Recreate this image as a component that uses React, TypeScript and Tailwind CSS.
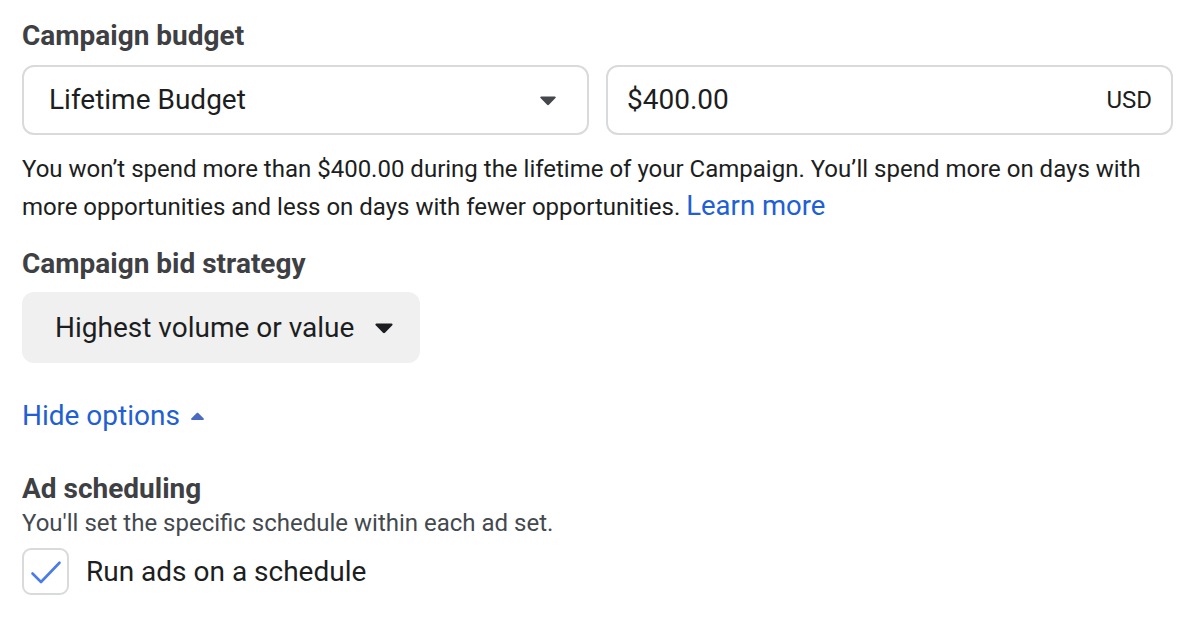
import React from "react";

const Caret = ({ className }: { className: string }) => (
  <svg viewBox="0 0 20 12" className={className} fill="currentColor">
    <path d="M2.5 1.5h15c1 0 1.5 1.1.8 1.8l-7.3 7.4c-.6.6-1.4.6-2 0L1.7 3.3c-.7-.7-.2-1.8.8-1.8z" />
  </svg>
);

const CaretUp = ({ className }: { className: string }) => (
  <svg viewBox="0 0 20 12" className={className} fill="currentColor">
    <path d="M2.5 10.5h15c1 0 1.5-1.1.8-1.8L11 1.3c-.6-.6-1.4-.6-2 0L1.7 8.7c-.7.7-.2 1.8.8 1.8z" />
  </svg>
);

const App = (): React.ReactElement => {
  return (
    <div
      className="w-[1186px] h-[622px] bg-white pl-[22px] pr-[13px] pt-[20px] text-[#1c1e21]"
      style={{ fontFamily: "Roboto, 'Liberation Sans', sans-serif" }}
    >
      <h2 className="text-[28px] leading-[32px] font-bold text-[#3e4043]">
        Campaign budget
      </h2>
      <div className="mt-[13px] grid grid-cols-2 gap-[17px]">
        <div className="h-[70px] rounded-[12px] border-2 border-[#d9dadc] flex items-center pl-[25px] pr-[30px]">
          <span className="flex-1 text-[28px]">Lifetime Budget</span>
          <Caret className="w-[18px] h-[11px] text-[#44474c]" />
        </div>
        <div className="h-[70px] rounded-[12px] border-2 border-[#d9dadc] flex items-center pl-[19px] pr-[19px]">
          <span className="flex-1 text-[28px]">$400.00</span>
          <span className="text-[24px]">USD</span>
        </div>
      </div>
      <p className="mt-[15px] text-[24px] leading-[38px]">
        You won’t spend more than $400.00 during the lifetime of your Campaign.
        You’ll spend more on days with more opportunities and less on days with
        fewer opportunities.{" "}
        <a className="inline-block text-[#2160d4] text-[27.5px] leading-[30px]">
          Learn more
        </a>
      </p>
      <h2 className="mt-[22px] text-[28px] leading-[32px] font-bold text-[#3e4043]">
        Campaign bid strategy
      </h2>
      <div className="mt-[12px] w-[398px] h-[71px] rounded-[12px] bg-[#f0f0f0] flex items-center pl-[33px] pr-[26px]">
        <span className="flex-1 text-[28px]">Highest volume or value</span>
        <Caret className="w-[20px] h-[12px] text-[#1c1e21]" />
      </div>
      <div className="mt-[37px] flex items-center gap-[10px] text-[#2160d4]">
        <span className="text-[28px] leading-[32px]">Hide options</span>
        <CaretUp className="w-[15px] h-[9px] text-[#4a6cc0]" />
      </div>
      <h2 className="mt-[41px] text-[28px] leading-[32px] font-bold text-[#3e4043]">
        Ad scheduling
      </h2>
      <div className="mt-[3px] text-[24px] leading-[30px] text-[#444950]">
        You'll set the specific schedule within each ad set.
      </div>
      <label className="mt-[10px] flex items-center gap-[17px]">
        <span className="w-[47px] h-[47px] rounded-[9px] border-2 border-[#d9dadc] flex items-center justify-center">
          <svg
            viewBox="0 0 24 24"
            className="w-[30px] h-[30px] overflow-visible"
            fill="none"
          >
            <path
              d="M1.2 13.2L8 20L22.8 4.6"
              stroke="#4a7be6"
              strokeWidth="2.1"
              strokeLinecap="round"
              strokeLinejoin="round"
            />
          </svg>
        </span>
        <span className="text-[28px]">Run ads on a schedule</span>
      </label>
    </div>
  );
};

export default App;
